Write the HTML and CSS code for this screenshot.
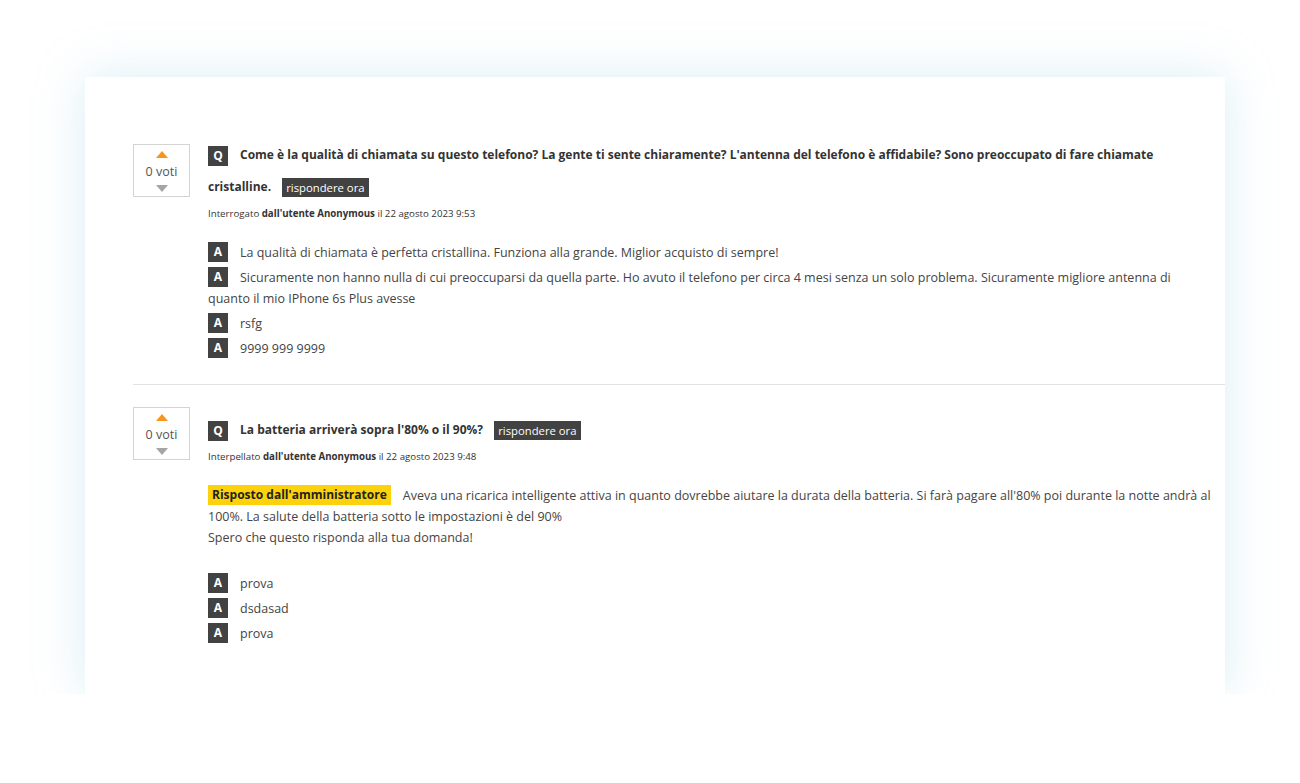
FILE: index.html
```
<!DOCTYPE html>
<html lang="it">
<head>
  <meta charset="UTF-8" />
  <meta name="viewport" content="width=device-width, initial-scale=1.0" />
  <title>Domande e risposte</title>
  <link rel="stylesheet" href="styles.css">
</head>
<body>
  <div class="qa-card">
    <div class="qa-item qa-item-first">
      <div class="vote-box">
        <span class="vote-up"></span>
        <span class="vote-count">0 voti</span>
        <span class="vote-down"></span>
      </div>
      <div class="qa-body">
        <div class="question">
          <span class="badge">Q</span>Come è la qualità di chiamata su questo telefono? La gente ti sente chiaramente? L'antenna del telefono è affidabile? Sono preoccupato di fare chiamate cristalline. <span class="reply-now">rispondere ora</span>
        </div>
        <div class="meta">Interrogato <b>dall'utente Anonymous</b> il 22 agosto 2023 9:53</div>
        <ul class="answers">
          <li><span class="badge">A</span>La qualità di chiamata è perfetta cristallina. Funziona alla grande. Miglior acquisto di sempre!</li>
          <li><span class="badge">A</span>Sicuramente non hanno nulla di cui preoccuparsi da quella parte. Ho avuto il telefono per circa 4 mesi senza un solo problema. Sicuramente migliore antenna di quanto il mio IPhone 6s Plus avesse</li>
          <li><span class="badge">A</span>rsfg</li>
          <li><span class="badge">A</span>9999 999 9999</li>
        </ul>
      </div>
    </div>

    <div class="qa-item qa-item-last">
      <div class="vote-box">
        <span class="vote-up"></span>
        <span class="vote-count">0 voti</span>
        <span class="vote-down"></span>
      </div>
      <div class="qa-body">
        <div class="question">
          <span class="badge">Q</span>La batteria arriverà sopra l'80% o il 90%? <span class="reply-now">rispondere ora</span>
        </div>
        <div class="meta">Interpellato <b>dall'utente Anonymous</b> il 22 agosto 2023 9:48</div>
        <div class="admin-answer">
          <span class="admin-tag">Risposto dall'amministratore</span>Aveva una ricarica intelligente attiva in quanto dovrebbe aiutare la durata della batteria. Si farà pagare all'80% poi durante la notte andrà al 100%. La salute della batteria sotto le impostazioni è del 90%<br>
          Spero che questo risponda alla tua domanda!
        </div>
        <ul class="answers answers-after-admin">
          <li><span class="badge">A</span>prova</li>
          <li><span class="badge">A</span>dsdasad</li>
          <li><span class="badge">A</span>prova</li>
        </ul>
      </div>
    </div>
  </div>
</body>
</html>
```

FILE: styles.css
```
body {
  font-family: 'Open Sans', sans-serif;
  background-color: #fff;
  color: #444;
  margin: 0;
  padding: 77px 0 0;
}
.qa-card {
  width: 1092px;
  height: 555px;
  margin: 0 0 0 85px;
  padding: 62px 0 0 48px;
  background: #fff;
  box-shadow: 0 0 45px rgba(150, 205, 225, 0.35);
}
.qa-item {
  display: flex;
  align-items: flex-start;
}
.qa-item-first {
  padding-bottom: 25px;
  border-bottom: 1px solid #e2e2e2;
}
.qa-item-first .vote-box {
  margin-top: 5px;
}
.qa-item-last {
  padding-top: 22px;
}
.qa-item-last .qa-body {
  padding-top: 7px;
}
.vote-box {
  flex: none;
  width: 55px;
  height: 41px;
  border: 1px solid #d4d4d4;
  margin-right: 18px;
  padding: 6px 0 4px;
  display: flex;
  flex-direction: column;
  align-items: center;
  box-sizing: content-box;
}
.vote-up {
  width: 0;
  height: 0;
  border-left: 6px solid transparent;
  border-right: 6px solid transparent;
  border-bottom: 7px solid #f7941d;
}
.vote-down {
  width: 0;
  height: 0;
  border-left: 6px solid transparent;
  border-right: 6px solid transparent;
  border-top: 7px solid #a5a5a5;
}
.vote-count {
  font-size: 12.5px;
  line-height: 24px;
  color: #555;
  margin: 2px 0 1px;
}
.qa-body {
  flex: 1;
  padding-right: 10px;
}
.badge {
  display: inline-block;
  width: 20px;
  height: 20px;
  line-height: 20px;
  background-color: #424242;
  color: #fff;
  font-weight: bold;
  font-size: 12px;
  text-align: center;
  margin-right: 12px;
  vertical-align: middle;
}
.question {
  font-weight: bold;
  font-size: 12px;
  line-height: 32px;
  color: #333;
}
.reply-now {
  display: inline-block;
  background-color: #424242;
  color: #fff;
  font-weight: normal;
  font-size: 11.3px;
  line-height: 19px;
  padding: 0 4px;
  margin-left: 8px;
  vertical-align: middle;
}
.meta {
  font-size: 9.7px;
  line-height: 22px;
  color: #333;
}
.answers {
  list-style: none;
  margin: 17px 0 0;
  padding: 0;
  font-size: 12.5px;
  line-height: 21px;
}
.answers li {
  margin-bottom: 4px;
}
.answers li:last-child {
  margin-bottom: 0;
}
.answers .badge {
  vertical-align: top;
}
.answers-after-admin {
  margin-top: 25px;
}
.admin-answer {
  margin-top: 17px;
  font-size: 12.5px;
  line-height: 21px;
}
.admin-tag {
  display: inline-block;
  background-color: #fdd20c;
  color: #222;
  font-weight: bold;
  font-size: 12px;
  line-height: 20px;
  padding: 0 4px;
  margin-right: 12px;
  vertical-align: top;
}
```
